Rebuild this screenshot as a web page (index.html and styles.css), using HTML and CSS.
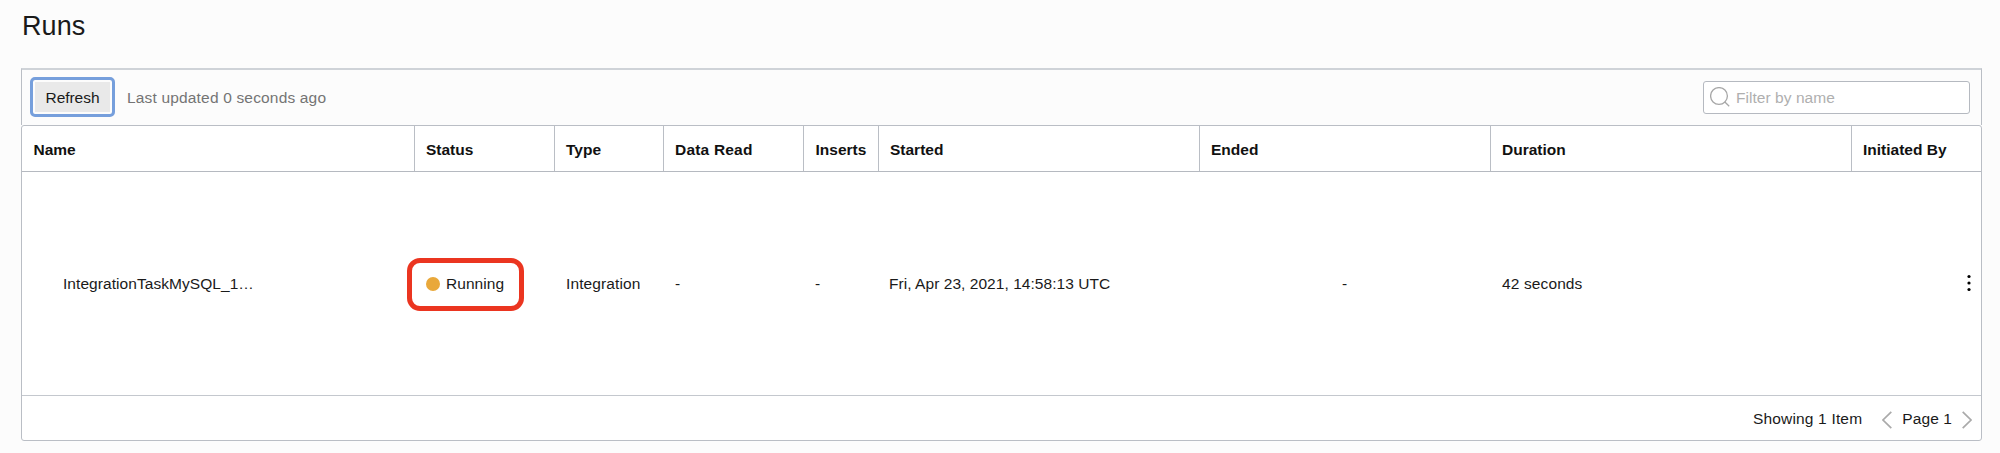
FILE: index.html
```html
<!DOCTYPE html>
<html lang="en">
<head>
<meta charset="utf-8">
<title>Runs</title>
<link rel="stylesheet" href="styles.css">
</head>
<body>
<main class="page">
  <h1 class="title">Runs</h1>
  <section class="panel">
    <div class="toolbar">
      <button class="refresh">Refresh</button>
      <span class="updated">Last updated 0 seconds ago</span>
      <label class="filter">
        <svg class="search" viewBox="0 0 20 20"><circle cx="9" cy="9" r="8.4"/><path d="M14.6 14.8l4.6 4.4"/></svg>
        <input class="filter-input" type="text" placeholder="Filter by name">
      </label>
    </div>
    <div class="table">
      <div class="row head">
        <div class="cell">Name</div>
        <div class="cell">Status</div>
        <div class="cell">Type</div>
        <div class="cell read">Data Read</div>
        <div class="cell inserts">Inserts</div>
        <div class="cell">Started</div>
        <div class="cell">Ended</div>
        <div class="cell">Duration</div>
        <div class="cell">Initiated By</div>
      </div>
      <div class="row body">
        <div class="cell name">IntegrationTaskMySQL_1…</div>
        <div class="cell status"><span class="mark"><i class="dot"></i>Running</span></div>
        <div class="cell type">Integration</div>
        <div class="cell">-</div>
        <div class="cell">-</div>
        <div class="cell date">Fri, Apr 23, 2021, 14:58:13 UTC</div>
        <div class="cell center">-</div>
        <div class="cell duration">42 seconds</div>
        <div class="cell actions"><svg class="kebab" viewBox="0 0 4 18"><circle cx="2" cy="2.5" r="1.6"/><circle cx="2" cy="9" r="1.6"/><circle cx="2" cy="15.5" r="1.6"/></svg></div>
      </div>
      <div class="footer">
        <span class="showing">Showing 1 Item</span>
        <svg class="chev prev" viewBox="0 0 10 18"><path d="M9.3.9L1 9l8.3 8.1"/></svg>
        <span class="page-number">Page 1</span>
        <svg class="chev" viewBox="0 0 10 18"><path d="M.7.9L9 9 .7 17.1"/></svg>
      </div>
    </div>
  </section>
</main>
</body>
</html>
```
FILE: styles.css
```css
* { box-sizing: border-box; }
body {
  margin: 0;
  background: #fcfcfc;
  color: #1a1a1a;
  font-family: "Liberation Sans", Arial, sans-serif;
  font-size: 15.5px;
  line-height: 20px;
}
.page { height: 453px; padding: 9px 18px 0 21px; overflow: hidden; }
.title { margin: 0; height: 59px; padding-left: 1px; font-size: 27px; line-height: 34px; font-weight: 400; letter-spacing: .1px; }
.toolbar {
  display: flex;
  align-items: center;
  height: 57px;
  padding: 0 11px 1px 8px;
  border: 1px solid #babec5;
  border-top: 2px solid #cfd3d8;
  border-bottom: 0;
}
.refresh {
  width: 85px;
  height: 40px;
  padding: 2px 0 0;
  border: 3px solid #769fdc;
  border-radius: 5px;
  background: #e9e9e9;
  box-shadow: inset 0 0 0 2px #fcfcfc;
  color: inherit;
  font: inherit;
  letter-spacing: -.05px;
}
.updated { margin: 2px 0 0 12px; color: #747474; letter-spacing: .17px; }
.filter {
  display: flex;
  align-items: center;
  width: 267px;
  height: 33px;
  margin-left: auto;
  padding-left: 6px;
  border: 1px solid #b5b9c0;
  border-radius: 3px;
  background: #fff;
}
.search { width: 20px; height: 20px; margin-top: -1px; fill: none; stroke: #a7a7a7; stroke-width: 1.3; }
.filter-input { width: 220px; margin: 2px 0 0 6px; padding: 0; border: 0; outline: 0; background: none; font: inherit; letter-spacing: .05px; }
.filter-input::placeholder { color: #afafaf; opacity: 1; }
.table { height: 316px; border: 1px solid #babec5; border-radius: 3px; background: #fff; }
.row { display: grid; grid-template-columns: 392px 140px 109px 140px 75px 321px 291px 361px 1fr; }
.head { height: 46px; border-bottom: 1px solid #b5b9c0; color: #111; font-weight: 700; }
.cell { display: flex; align-items: center; padding-left: 11px; white-space: nowrap; }
.head .cell { padding-top: 2px; }
.head .cell:first-child { padding-left: 11.5px; }
.head .cell + .cell { border-left: 1px solid #babec5; }
.head .read { letter-spacing: .2px; }
.head .inserts { padding-left: 11.5px; }
.body { height: 224px; border-bottom: 1px solid #c4c8ce; }
.body .cell { padding: 1px 0 0 12px; }
.body .name { padding-left: 41px; letter-spacing: .06px; }
.body .status { padding-left: 0; }
.body .type { letter-spacing: .12px; }
.body .date { padding-left: 11px; letter-spacing: .05px; }
.body .duration { letter-spacing: .12px; }
.mark {
  display: flex;
  align-items: center;
  flex: none;
  width: 117px;
  height: 53px;
  margin: 1px 0 0 -7px;
  padding: 0 0 1px 14px;
  border: 5px solid #eb3520;
  border-radius: 13px;
  letter-spacing: .05px;
}
.dot { width: 14px; height: 14px; margin-right: 6px; border-radius: 50%; background: #e9a83a; }
.body .center { justify-content: center; padding-left: 0; }
.body .actions { justify-content: flex-end; padding-right: 10px; }
.kebab { width: 4px; height: 18px; margin-top: -2px; }
.footer { display: flex; align-items: center; justify-content: flex-end; height: 44px; padding: 1px 9px 0 0; }
.chev { width: 10px; height: 18px; margin-top: 2px; fill: none; stroke: #aaa; stroke-width: 1.7; }
.prev { margin: 2px 10px 0 20px; }
.showing { letter-spacing: .18px; }
.page-number { margin-right: 10px; letter-spacing: .1px; }
```
